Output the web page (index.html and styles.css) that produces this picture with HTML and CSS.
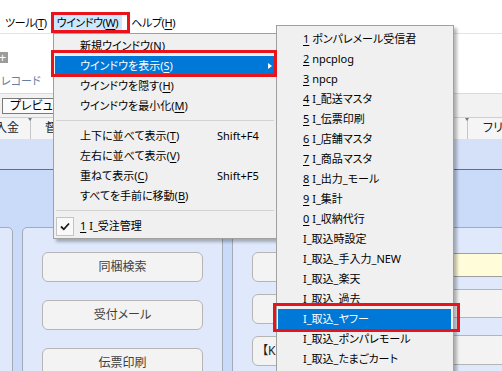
FILE: index.html
```html
<!DOCTYPE html>
<html lang="ja">
<head>
    <meta charset="UTF-8">
    <title>ウインドウ メニュー</title>
    <link rel="stylesheet" href="styles.css">
</head>
<body>
    <div class="app">
        <div class="menubar">
            <span class="mb-item">ツール(<u>T</u>)</span>
            <span class="mb-item mb-open">ウインドウ(<u>W</u>)</span>
            <span class="mb-item">ヘルプ(<u>H</u>)</span>
        </div>

        <div class="ribbon">
            <div class="ribbon-plus">+</div>
            <div class="ribbon-labels">
                <span>レコード</span>
                <span>レ</span>
            </div>
        </div>

        <div class="toolband">
            <div class="preview-btn">プレビュー</div>
        </div>

        <div class="tabrow">
            <div class="tab-cell tab-first">入金</div>
            <div class="tab-cell tab-mid">督促</div>
            <div class="tab-cell tab-last">フリー</div>
        </div>

        <div class="band"></div>

        <div class="workarea">
            <div class="panel panel-edge"></div>
            <div class="panel panel-left">
                <div class="pbtn">同梱検索</div>
                <div class="pbtn">受付メール</div>
                <div class="pbtn">伝票印刷</div>
            </div>
            <div class="panel panel-mid">
                <div class="col col-a">
                    <div class="pbtn"></div>
                    <div class="pbtn"></div>
                    <div class="pbtn pbtn-left">【K】</div>
                </div>
                <div class="col col-b">
                    <div class="yellow-box"></div>
                    <div class="pbtn pbtn-b1"></div>
                    <div class="pbtn pbtn-b2"></div>
                </div>
            </div>
        </div>
    </div>

    <!-- open Window menu -->
    <div class="menu menu-window">
        <div class="mi"><span class="mi-label">新規ウインドウ(<u>N</u>)</span></div>
        <div class="mi mi-active"><span class="mi-label">ウインドウを表示(<u>S</u>)</span><span class="mi-arrow"></span></div>
        <div class="mi"><span class="mi-label">ウインドウを隠す(<u>H</u>)</span></div>
        <div class="mi"><span class="mi-label">ウインドウを最小化(<u>M</u>)</span></div>
        <div class="sep"></div>
        <div class="mi"><span class="mi-label">上下に並べて表示(<u>T</u>)</span><span class="mi-key">Shift+F4</span></div>
        <div class="mi"><span class="mi-label">左右に並べて表示(<u>V</u>)</span></div>
        <div class="mi"><span class="mi-label">重ねて表示(<u>C</u>)</span><span class="mi-key">Shift+F5</span></div>
        <div class="mi"><span class="mi-label">すべてを手前に移動(<u>B</u>)</span></div>
        <div class="sep"></div>
        <div class="mi mi-checked">
            <span class="check">
                <svg width="10" height="9" viewBox="0 0 10 9"><path d="M1 4.5 L3.8 7.3 L9 1.5" fill="none" stroke="#1a1a1a" stroke-width="1.8"/></svg>
            </span>
            <span class="mi-label"><u>1</u> I_受注管理</span>
        </div>
    </div>

    <!-- submenu: ウインドウを表示 -->
    <div class="menu menu-sub">
        <div class="mi"><span class="mi-label"><u>1</u> ポンパレメール受信君</span></div>
        <div class="mi"><span class="mi-label"><u>2</u> npcplog</span></div>
        <div class="mi"><span class="mi-label"><u>3</u> npcp</span></div>
        <div class="mi"><span class="mi-label"><u>4</u> I_配送マスタ</span></div>
        <div class="mi"><span class="mi-label"><u>5</u> I_伝票印刷</span></div>
        <div class="mi"><span class="mi-label"><u>6</u> I_店舗マスタ</span></div>
        <div class="mi"><span class="mi-label"><u>7</u> I_商品マスタ</span></div>
        <div class="mi"><span class="mi-label"><u>8</u> I_出力_モール</span></div>
        <div class="mi"><span class="mi-label"><u>9</u> I_集計</span></div>
        <div class="mi"><span class="mi-label"><u>0</u> I_収納代行</span></div>
        <div class="mi"><span class="mi-label">I_取込時設定</span></div>
        <div class="mi"><span class="mi-label">I_取込_手入力_NEW</span></div>
        <div class="mi"><span class="mi-label">I_取込_楽天</span></div>
        <div class="mi"><span class="mi-label">I_取込_過去</span></div>
        <div class="mi mi-active"><span class="mi-label">I_取込_ヤフー</span></div>
        <div class="mi"><span class="mi-label">I_取込_ポンパレモール</span></div>
        <div class="mi"><span class="mi-label">I_取込_たまごカート</span></div>
    </div>

    <!-- red callouts -->
    <div class="mark mark-bar"></div>
    <div class="mark mark-show"></div>
    <div class="mark mark-yahoo"></div>
</body>
</html>
```

FILE: styles.css
```css
body {
    margin: 0;
    width: 502px;
    height: 371px;
    overflow: hidden;
    position: relative;
    background: #ffffff;
    font-family: "Noto Sans", "Noto Sans CJK JP", sans-serif;
    font-size: 12px;
    color: #000;
    font-feature-settings: "palt";
}
u {
    text-decoration-thickness: 1px;
    text-underline-offset: 2px;
}

/* background application window */
.app {
    display: flex;
    flex-direction: column;
    height: 371px;
}
.menubar {
    display: flex;
    padding-top: 13px;
    height: 20px;
    border-bottom: 1px solid #e3e3e3;
    font-size: 11px;
    letter-spacing: -0.4px;
}
.mb-item {
    padding: 0 4px;
    line-height: 20px;
    height: 20px;
    white-space: nowrap;
}
.mb-item:first-child {
    padding-left: 5px;
    margin-right: 2px;
}
.mb-item:last-child {
    padding-left: 9px;
}
.mb-open {
    background: #cce8ff;
}
.ribbon {
    height: 59px;
    display: flex;
    flex-direction: column;
}
.ribbon-plus {
    margin-top: 18px;
    margin-left: -3px;
    width: 11px;
    height: 11px;
    background: #9c9c9c;
    color: #fff;
    font-size: 13px;
    line-height: 10px;
    text-align: center;
}
.ribbon-labels {
    display: flex;
    gap: 12px;
    margin-top: 9px;
    padding-left: 1px;
    color: #65809f;
    font-size: 11px;
}
.toolband {
    border-top: 1px solid #dadada;
    background: #f2f2f2;
    padding-top: 4px;
    box-sizing: border-box;
    height: 24px;
}
.preview-btn {
    margin-left: 2px;
    width: 120px;
    height: 16px;
    box-sizing: border-box;
    border: 1px solid #7a7a7a;
    background: #fbfbfb;
    padding-left: 7px;
    line-height: 14px;
    font-size: 12px;
}
.tabrow {
    display: flex;
    height: 21px;
    border-top: 1px solid #cfcfcf;
    background: #f5f5f5;
    line-height: 20px;
    color: #222;
}
.tab-cell {
    position: relative;
    box-sizing: border-box;
    white-space: nowrap;
    flex-shrink: 0;
}
.tab-cell + .tab-cell {
    border-left: 1px solid #c6c6c6;
}
.tab-cell + .tab-cell::before {
    content: "";
    position: absolute;
    left: -3px;
    top: 0;
    border-left: 2.5px solid transparent;
    border-right: 2.5px solid transparent;
    border-top: 3px solid #777;
}
.tab-first {
    width: 30px;
    display: flex;
    justify-content: flex-end;
    padding-right: 11px;
    overflow: hidden;
}
.tab-mid {
    width: 437px;
    padding-left: 14px;
}
.tab-last {
    flex: 1;
    flex-shrink: 1;
    min-width: 0;
    padding-left: 15px;
}
.band {
    height: 30px;
    background: #d5e1f9;
    border-bottom: 1px solid #6e6e6e;
}
.workarea {
    flex: 1;
    display: flex;
    gap: 9px;
    background: #c9dbf8;
    padding-top: 57px;
    margin-left: -20px;
    overflow: hidden;
}
.panel {
    background: #e0e9fc;
    border: 1px solid #a3abb8;
    border-radius: 5px;
    box-sizing: border-box;
    height: 200px;
    flex-shrink: 0;
}
.panel-edge {
    width: 33px;
}
.panel-left {
    width: 201px;
    padding: 24px 19px;
    display: flex;
    flex-direction: column;
    gap: 18px;
}
.panel-mid {
    width: 300px;
    padding: 24px 19px;
    display: flex;
    gap: 50px;
}
.col {
    width: 160px;
    display: flex;
    flex-direction: column;
}
.col-a {
    gap: 12px;
}
.pbtn {
    height: 30px;
    flex-shrink: 0;
    box-sizing: border-box;
    border: 1px solid #b5b5b5;
    border-radius: 6px;
    background: #f3f3f3;
    color: #404040;
    text-align: center;
    line-height: 28px;
    font-size: 12px;
}
.pbtn-left {
    text-align: left;
    padding-left: 9px;
    color: #222;
}
.yellow-box {
    margin-top: 1px;
    height: 24px;
    box-sizing: border-box;
    border: 1px solid #a0a0a0;
    background: #fffcd9;
}
.pbtn-b1 {
    margin-top: 12px;
    height: 29px;
}
.pbtn-b2 {
    margin-top: 17px;
}

/* popup menus */
.menu {
    position: absolute;
    box-sizing: border-box;
    background: #f0f0f0;
    border: 1px solid #a0a0a0;
    padding: 2px 2px 2px 1px;
    box-shadow: 3px 3px 3px rgba(0, 0, 0, 0.28);
    font-size: 11px;
}
.menu-window {
    left: 53px;
    top: 33px;
    width: 224px;
}
.menu-sub {
    left: 276px;
    top: 25px;
    width: 178px;
    padding-top: 3px;
}
.mi {
    display: grid;
    grid-template-columns: 25px 1fr 45px 12px;
    height: 20px;
    line-height: 20px;
    white-space: nowrap;
}
.mi-label {
    grid-column: 2;
}
.mi-key {
    grid-column: 3;
}
.mi-arrow {
    grid-column: 4;
    align-self: center;
    width: 0;
    height: 0;
    margin-left: 6px;
    border-left: 4px solid #fff;
    border-top: 3.5px solid transparent;
    border-bottom: 3.5px solid transparent;
}
.mi-active {
    background: #0078d7;
    color: #fff;
}
.sep {
    height: 10px;
    position: relative;
}
.sep::after {
    content: "";
    position: absolute;
    left: 1px;
    right: 0;
    top: 4px;
    border-top: 1px solid #d2d2d2;
}
.check {
    grid-column: 1;
    margin: 1px 0 0 1px;
    width: 18px;
    height: 19px;
    box-sizing: border-box;
    border: 1px solid #c4c4c4;
    background: #f9f9f9;
    display: flex;
    align-items: center;
    justify-content: center;
}

/* red annotation boxes */
.mark {
    position: absolute;
    box-sizing: border-box;
    border: 3px solid #e8141c;
}
.mark-bar {
    left: 51px;
    top: 12px;
    width: 79px;
    height: 21px;
}
.mark-show {
    left: 51px;
    top: 50px;
    width: 226px;
    height: 27px;
}
.mark-yahoo {
    left: 273px;
    top: 303px;
    width: 187px;
    height: 29px;
}
```
